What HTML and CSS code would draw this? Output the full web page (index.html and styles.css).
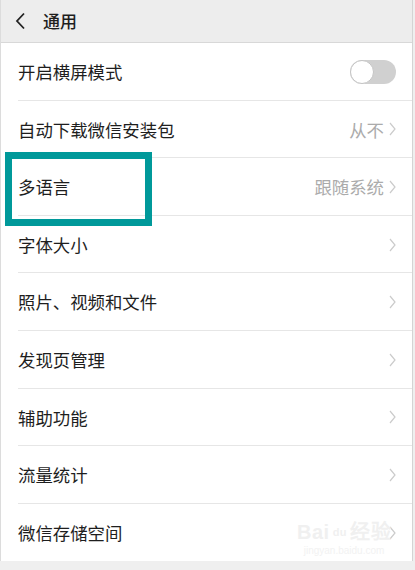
FILE: index.html
```html
<!DOCTYPE html>
<html lang="zh-CN">
<head>
	<meta charset="UTF-8">
	<meta name="viewport" content="width=device-width, initial-scale=1.0">
	<title>通用</title>
	<link rel="stylesheet" href="styles.css">
</head>
<body>
	<div class="page">
		<div class="header">
			<a href="#" class="btn-back">
				<svg width="11" height="18" viewBox="0 0 11 18"><polyline points="9,1.5 2,9 9,16.5" fill="none" stroke="#222" stroke-width="1.8"/></svg>
			</a>
			<span class="title">通用</span>
		</div>
		<ul class="list-set">
			<li class="item-set">
				<span class="label">开启横屏模式</span>
				<span class="switch"><span class="knob"></span></span>
			</li>
			<li class="item-set">
				<span class="label">自动下载微信安装包</span>
				<span class="value">从不</span>
				<svg class="arrow" width="7" height="14" viewBox="0 0 7 14"><polyline points="1,1 6,7 1,13" fill="none" stroke="#cbcbcb" stroke-width="1.2"/></svg>
			</li>
			<li class="item-set">
				<span class="label">多语言</span>
				<span class="value">跟随系统</span>
				<svg class="arrow" width="7" height="14" viewBox="0 0 7 14"><polyline points="1,1 6,7 1,13" fill="none" stroke="#cbcbcb" stroke-width="1.2"/></svg>
			</li>
			<li class="item-set">
				<span class="label">字体大小</span>
				<svg class="arrow" width="7" height="14" viewBox="0 0 7 14"><polyline points="1,1 6,7 1,13" fill="none" stroke="#cbcbcb" stroke-width="1.2"/></svg>
			</li>
			<li class="item-set">
				<span class="label">照片、视频和文件</span>
				<svg class="arrow" width="7" height="14" viewBox="0 0 7 14"><polyline points="1,1 6,7 1,13" fill="none" stroke="#cbcbcb" stroke-width="1.2"/></svg>
			</li>
			<li class="item-set">
				<span class="label">发现页管理</span>
				<svg class="arrow" width="7" height="14" viewBox="0 0 7 14"><polyline points="1,1 6,7 1,13" fill="none" stroke="#cbcbcb" stroke-width="1.2"/></svg>
			</li>
			<li class="item-set">
				<span class="label">辅助功能</span>
				<svg class="arrow" width="7" height="14" viewBox="0 0 7 14"><polyline points="1,1 6,7 1,13" fill="none" stroke="#cbcbcb" stroke-width="1.2"/></svg>
			</li>
			<li class="item-set">
				<span class="label">流量统计</span>
				<svg class="arrow" width="7" height="14" viewBox="0 0 7 14"><polyline points="1,1 6,7 1,13" fill="none" stroke="#cbcbcb" stroke-width="1.2"/></svg>
			</li>
			<li class="item-set">
				<span class="label">微信存储空间</span>
				<svg class="arrow" width="7" height="14" viewBox="0 0 7 14"><polyline points="1,1 6,7 1,13" fill="none" stroke="#cbcbcb" stroke-width="1.2"/></svg>
			</li>
		</ul>
		<!-- 强调框 -->
		<div class="mark"></div>
		<!-- 水印 -->
		<div class="watermark">
			<div class="wm-logo">Bai<span class="wm-paw">du</span>经验</div>
			<div class="wm-url">jingyan.baidu.com</div>
		</div>
	</div>
</body>
</html>
```

FILE: styles.css
```css
html, body{margin: 0; padding: 0;}
body{
	background: #efefef; width: 415px; height: 570px; overflow: hidden;
	font-family: "Noto Sans CJK SC", "Noto Sans", sans-serif; color: #1e1e1e;
}
.page{
	position: relative; width: 411px; background: #fff;
	border-left: 1px solid #dcdcdc; border-right: 1px solid #d4d4d4;
}
.header{
	height: 42px; background: #ededed; border-bottom: 1px solid #d8d8d8;
	display: flex; align-items: center; padding-left: 14px;
}
.btn-back{display: flex; width: 28px; margin-top: -1px;}
.title{font-size: 17px; font-weight: 500; margin-top: -2px;}
.list-set{list-style: none; margin: 0; padding: 0;}
.item-set{
	height: 57.6px; box-sizing: border-box; position: relative;
	display: flex; align-items: center; padding: 0 16px 0 17px;
}
.item-set::after{
	content: ''; position: absolute; left: 17px; right: 0; bottom: 0;
	height: 1px; background: #e6e6e6;
}
.item-set:last-child::after{display: none;}
.label{flex: 1; font-size: 17.4px; line-height: 1;}
.value{font-size: 17.4px; color: #ababab; margin-right: 5px; line-height: 1;}
.arrow{display: block;}
.switch{
	width: 46px; height: 24px; border-radius: 12px; background: #d0d0d0;
	position: relative;
}
.knob{
	position: absolute; left: 0; top: 0; width: 22px; height: 22px;
	border-radius: 50%; background: #fff; border: 1px solid #c4c4c4;
}
.mark{
	position: absolute; left: 4px; top: 152px; width: 133px; height: 60px;
	border: 7px solid #00999a;
}
.watermark{
	position: absolute; left: 296px; top: 518px; color: #f0f0f0;
	font-family: "Liberation Sans", sans-serif; text-align: center;
}
.wm-logo{font-size: 20px; font-weight: bold; line-height: 28px; letter-spacing: 0.5px;}
.wm-paw{font-size: 11px; vertical-align: 3px; margin: 0 3px;}
.wm-url{font-size: 10px; line-height: 10px; color: #f2f2f2;}
```
